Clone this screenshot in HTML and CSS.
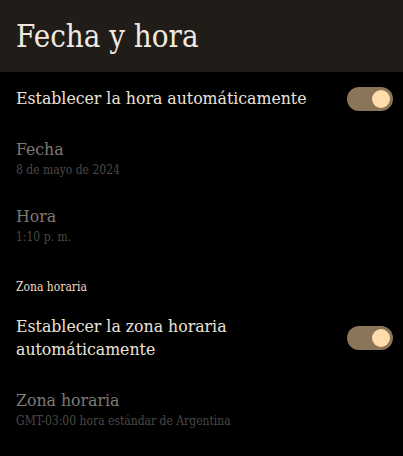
FILE: index.html
```html
<!DOCTYPE html>
<html lang="es">
<head>
    <meta charset="UTF-8">
    <meta name="viewport" content="width=device-width, initial-scale=1.0">
    <title>Fecha y hora</title>
    <link rel="stylesheet" href="styles.css">
</head>
<body>
    <div class="app-bar">
        <h1>Fecha y hora</h1>
    </div>

    <div class="pref pref-switch">
        <div class="pref-title">Establecer la hora automáticamente</div>
        <div class="switch"><span class="thumb"></span></div>
    </div>

    <div class="pref disabled">
        <div class="pref-title">Fecha</div>
        <div class="pref-summary">8 de mayo de 2024</div>
    </div>

    <div class="pref disabled">
        <div class="pref-title">Hora</div>
        <div class="pref-summary">1:10 p. m.</div>
    </div>

    <div class="category">Zona horaria</div>

    <div class="pref pref-switch two-line">
        <div class="pref-title">Establecer la zona horaria automáticamente</div>
        <div class="switch"><span class="thumb"></span></div>
    </div>

    <div class="pref disabled last">
        <div class="pref-title">Zona horaria</div>
        <div class="pref-summary">GMT-03:00 hora estándar de Argentina</div>
    </div>
</body>
</html>
```

FILE: styles.css
```css
body {
    margin: 0;
    background-color: #000;
    font-family: "DejaVu Serif", "Liberation Serif", serif;
    font-stretch: condensed;
    color: #ebe3da;
    width: 403px;
    height: 456px;
    overflow: hidden;
}

.app-bar {
    height: 72px;
    background-color: #201d19;
    padding: 0 16px;
}

.app-bar h1 {
    margin: 0;
    font-size: 31px;
    font-weight: normal;
    line-height: 72px;
    color: #f1e9e0;
}

.pref {
    padding: 13px 16px;
}

.pref-switch {
    display: flex;
    align-items: center;
    height: 53px;
    box-sizing: border-box;
    padding: 0 10px 0 16px;
}

.pref-switch.two-line {
    height: auto;
    padding-top: 17px;
    padding-bottom: 16px;
}

.pref-switch .pref-title {
    flex: 1;
    margin-right: 16px;
}

.pref-title {
    font-size: 17.5px;
    line-height: 23px;
}

.pref-summary {
    font-size: 12px;
    line-height: 18px;
}

.disabled .pref-title {
    color: #7e7a76;
}

.disabled .pref-summary {
    color: #4c4946;
}

.category {
    padding: 20px 16px 3px;
    font-size: 12px;
    line-height: 16px;
    color: #f3dcc0;
}

.switch {
    flex: none;
    width: 46px;
    height: 24px;
    border-radius: 12px;
    background-color: #8b7558;
    display: flex;
    align-items: center;
    justify-content: flex-end;
    padding-right: 3px;
    box-sizing: border-box;
}

.thumb {
    width: 18px;
    height: 18px;
    border-radius: 50%;
    background-color: #ffdcab;
}

.last {
    padding-top: 12px;
}
```
